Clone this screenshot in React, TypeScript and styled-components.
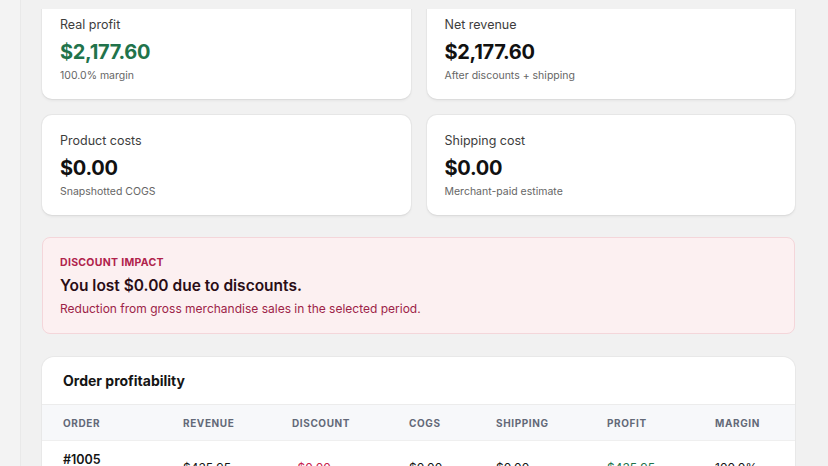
import styled, { createGlobalStyle } from "styled-components";

const GlobalStyle = createGlobalStyle`
  html, body {
    margin: 0;
    padding: 0;
    background: #f1f1f1;
    font-family: Inter, "Noto Sans", "Liberation Sans", sans-serif;
    -webkit-font-smoothing: antialiased;
  }
  #root {
    height: 466px;
    overflow: hidden;
  }
`;

const Shell = styled.div`
  display: flex;
  height: 466px;
  position: relative;
`;

// 왼쪽 사이드바 가장자리
const SideEdge = styled.div`
  width: 20px;
  flex-shrink: 0;
  background: #f3f3f3;
  border-right: 1px solid #e9e9e9;
`;

const Main = styled.main`
  flex: 1;
  padding: 0 33px 0 21px;
  position: relative;
`;

const TopFade = styled.div`
  position: absolute;
  top: 0;
  left: 0;
  right: 0;
  height: 9px;
  background: #f1f1f1;
  z-index: 2;
`;

const Stack = styled.div`
  display: flex;
  flex-direction: column;
  gap: 22px;
  margin-top: -1px;
`;

const StatGrid = styled.div`
  display: grid;
  grid-template-columns: 1fr 1fr;
  gap: 16px;
`;

const StatCard = styled.div`
  background: #fff;
  border-radius: 10px;
  box-shadow: 0 1px 0 #dcdcdc, 0 0 0 1px #e6e6e6, 0 2px 3px rgba(0, 0, 0, 0.05);
  padding: 17px 18px 14px;
  display: flex;
  flex-direction: column;
  height: 100px;
  box-sizing: border-box;
`;

const StatLabel = styled.div`
  font-size: 12.5px;
  line-height: 18px;
  color: #3d3d3d;
`;

const StatValue = styled.div<{ $tone?: "good" }>`
  font-size: 20px;
  line-height: 26px;
  font-weight: 700;
  margin-top: 5px;
  letter-spacing: -0.3px;
  color: ${({ $tone }) => ($tone === "good" ? "#21734b" : "#111")};
`;

const StatNote = styled.div`
  font-size: 10.5px;
  line-height: 16px;
  margin-top: 3px;
  color: #666;
`;

const ImpactBox = styled.div`
  background: #fcf0f1;
  border: 1px solid #f4d6da;
  border-radius: 8px;
  padding: 17px 17px 14px;
  display: flex;
  flex-direction: column;
  height: 97px;
  box-sizing: border-box;
  margin-bottom: 1px;
`;

const ImpactTag = styled.div`
  font-size: 10.5px;
  line-height: 16px;
  font-weight: 700;
  letter-spacing: 0.3px;
  color: #b0234c;
  text-transform: uppercase;
`;

const ImpactTitle = styled.div`
  font-size: 15.5px;
  line-height: 22px;
  font-weight: 600;
  color: #2a0d16;
  margin-top: 4px;
`;

const ImpactText = styled.div`
  font-size: 12px;
  line-height: 18px;
  color: #9c2348;
  margin-top: 3px;
`;

const TableCard = styled.div`
  background: #fff;
  border-radius: 12px;
  box-shadow: 0 0 0 1px #e8e8e8;
  overflow: hidden;
`;

const TableTitle = styled.div`
  font-size: 14px;
  line-height: 20px;
  font-weight: 700;
  color: #151515;
  padding: 14px 21px 13px;
  border-bottom: 1px solid #ececec;
`;

const Row = styled.div<{ $head?: boolean }>`
  display: grid;
  grid-template-columns: 120px 109px 117px 87px 111px 108px 1fr;
  align-items: center;
  padding: 0 21px;
  height: ${({ $head }) => ($head ? "35px" : "52px")};
  background: ${({ $head }) => ($head ? "#f7f8fa" : "#fff")};
  border-bottom: 1px solid #efefef;
`;

const HeadCell = styled.div`
  font-size: 10px;
  font-weight: 700;
  letter-spacing: 0.6px;
  color: #636978;
  text-transform: uppercase;
`;

const Cell = styled.div<{ $tone?: "good" | "bad" }>`
  font-size: 12px;
  color: ${({ $tone }) =>
    $tone === "good" ? "#21734b" : $tone === "bad" ? "#c8234d" : "#151515"};
`;

const OrderCell = styled.div`
  display: flex;
  flex-direction: column;
  align-self: start;
  margin-top: 10px;
`;

const OrderId = styled.div`
  font-size: 12.5px;
  font-weight: 600;
  color: #151515;
  line-height: 18px;
`;

const OrderDate = styled.div`
  font-size: 10.5px;
  color: #6b6b6b;
  line-height: 16px;
`;

const stats = [
  { label: "Real profit", value: "$2,177.60", note: "100.0% margin", tone: "good" as const },
  { label: "Net revenue", value: "$2,177.60", note: "After discounts + shipping" },
  { label: "Product costs", value: "$0.00", note: "Snapshotted COGS" },
  { label: "Shipping cost", value: "$0.00", note: "Merchant-paid estimate" },
];

const columns = ["Order", "Revenue", "Discount", "COGS", "Shipping", "Profit", "Margin"];

const orders = [
  {
    id: "#1005",
    date: "Jan 12, 2025",
    revenue: "$435.95",
    discount: "-$0.00",
    cogs: "$0.00",
    shipping: "$0.00",
    profit: "$435.95",
    margin: "100.0%",
  },
];

export default function App() {
  return (
    <>
      <GlobalStyle />
      <Shell>
        <SideEdge />
        <Main>
          <TopFade />
          <Stack>
            <StatGrid>
              {stats.map((s) => (
                <StatCard key={s.label}>
                  <StatLabel>{s.label}</StatLabel>
                  <StatValue $tone={s.tone}>{s.value}</StatValue>
                  <StatNote>{s.note}</StatNote>
                </StatCard>
              ))}
            </StatGrid>

            <ImpactBox>
              <ImpactTag>Discount impact</ImpactTag>
              <ImpactTitle>You lost $0.00 due to discounts.</ImpactTitle>
              <ImpactText>Reduction from gross merchandise sales in the selected period.</ImpactText>
            </ImpactBox>

            <TableCard>
              <TableTitle>Order profitability</TableTitle>
              <Row $head>
                {columns.map((c) => (
                  <HeadCell key={c}>{c}</HeadCell>
                ))}
              </Row>
              {orders.map((o) => (
                <Row key={o.id}>
                  <OrderCell>
                    <OrderId>{o.id}</OrderId>
                    <OrderDate>{o.date}</OrderDate>
                  </OrderCell>
                  <Cell>{o.revenue}</Cell>
                  <Cell $tone="bad">{o.discount}</Cell>
                  <Cell>{o.cogs}</Cell>
                  <Cell>{o.shipping}</Cell>
                  <Cell $tone="good">{o.profit}</Cell>
                  <Cell>{o.margin}</Cell>
                </Row>
              ))}
            </TableCard>
          </Stack>
        </Main>
      </Shell>
    </>
  );
}
